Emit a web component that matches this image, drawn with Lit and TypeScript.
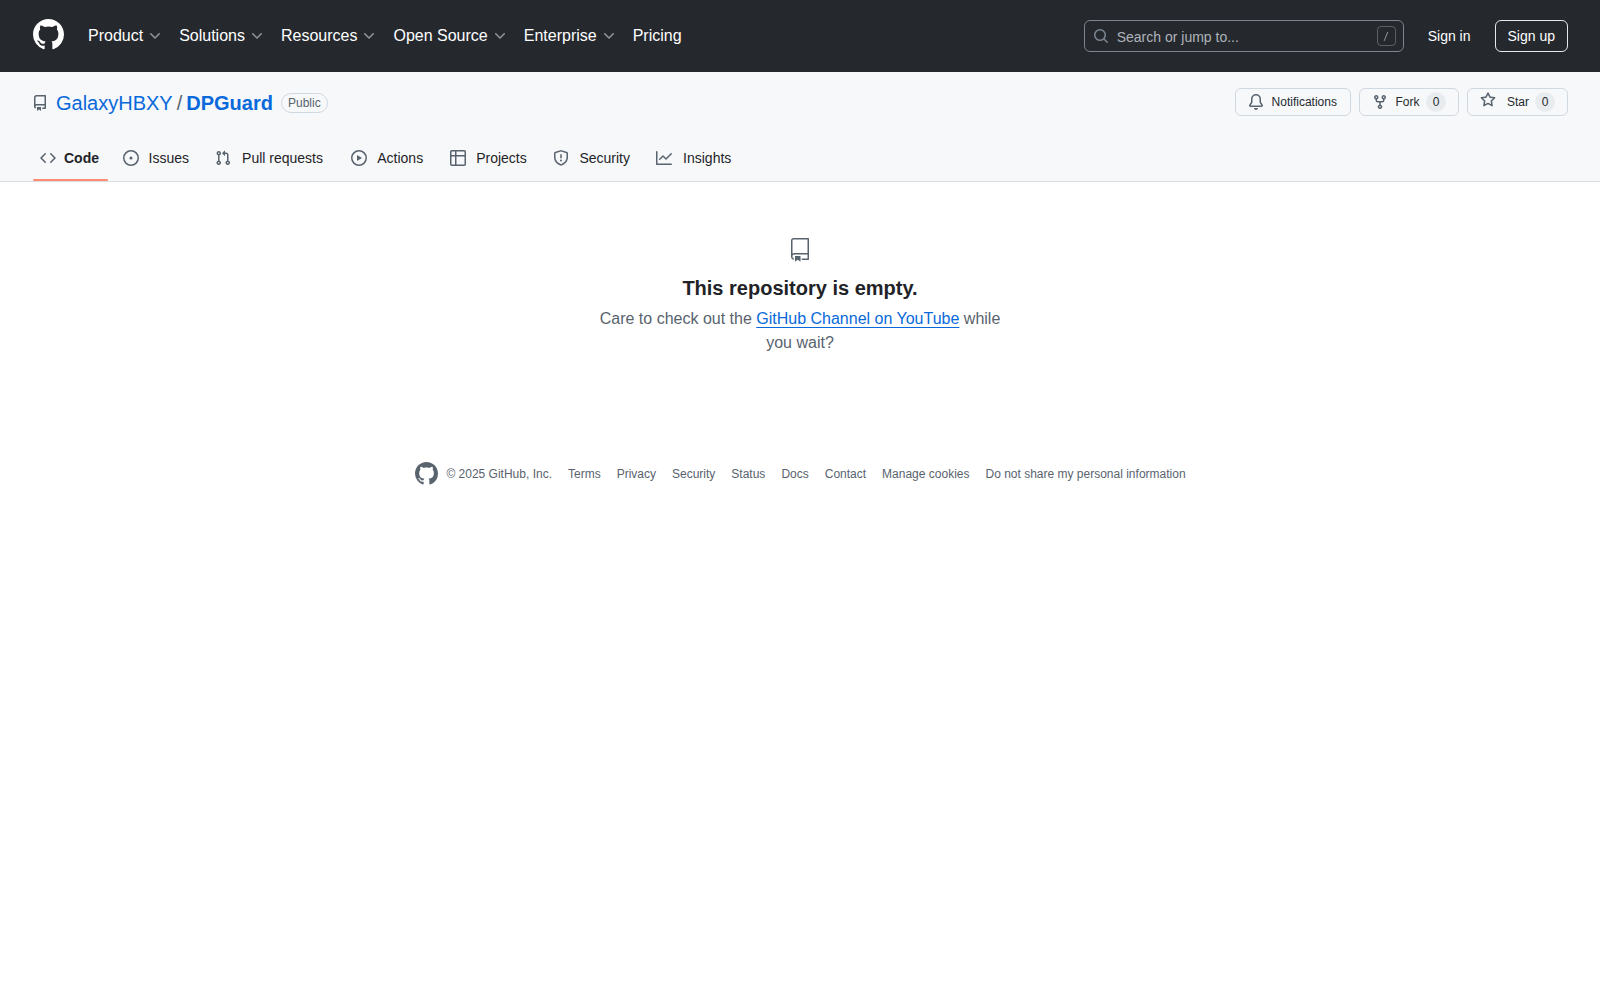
import { LitElement, html, css } from 'lit';
import { customElement } from 'lit/decorators.js';

const ICONS: Record<string, string> = {
  mark: 'M8 0c4.42 0 8 3.58 8 8a8.013 8.013 0 0 1-5.45 7.59c-.4.08-.55-.17-.55-.38 0-.27.01-1.13.01-2.2 0-.75-.25-1.23-.54-1.48 1.78-.2 3.65-.88 3.65-3.95 0-.88-.31-1.59-.82-2.15.08-.2.36-1.02-.08-2.12 0 0-.67-.22-2.2.82-.64-.18-1.32-.27-2-.27-.68 0-1.36.09-2 .27-1.53-1.03-2.2-.82-2.2-.82-.44 1.1-.16 1.92-.08 2.12-.51.56-.82 1.28-.82 2.15 0 3.06 1.86 3.75 3.64 3.95-.23.2-.44.55-.51 1.07-.46.21-1.61.55-2.33-.66-.15-.24-.6-.83-1.23-.82-.67.01-.27.38.01.53.34.19.73.9.82 1.13.16.45.68 1.31 2.69.94 0 .67.01 1.3.01 1.49 0 .21-.15.45-.55.38A7.995 7.995 0 0 1 0 8c0-4.42 3.58-8 8-8Z',
  repo: 'M2 2.5A2.5 2.5 0 0 1 4.5 0h8.75a.75.75 0 0 1 .75.75v12.5a.75.75 0 0 1-.75.75h-2.5a.75.75 0 0 1 0-1.5h1.75v-2h-8a1 1 0 0 0-.714 1.7.75.75 0 1 1-1.072 1.05A2.495 2.495 0 0 1 2 11.5Zm10.5-1h-8a1 1 0 0 0-1 1v6.708A2.486 2.486 0 0 1 4.5 9h8ZM5 12.25a.25.25 0 0 1 .25-.25h3.5a.25.25 0 0 1 .25.25v3.25a.25.25 0 0 1-.4.2l-1.45-1.087a.249.249 0 0 0-.3 0L5.4 15.7a.25.25 0 0 1-.4-.2Z',
  code: 'm11.28 3.22 4.25 4.25a.75.75 0 0 1 0 1.06l-4.25 4.25a.749.749 0 0 1-1.275-.326.749.749 0 0 1 .215-.734L13.94 8l-3.72-3.72a.749.749 0 0 1 .326-1.275.749.749 0 0 1 .734.215Zm-6.56 0a.751.751 0 0 1 1.042.018.751.751 0 0 1 .018 1.042L2.06 8l3.72 3.72a.749.749 0 0 1-.326 1.275.749.749 0 0 1-.734-.215L.47 8.53a.75.75 0 0 1 0-1.06Z',
  issue: 'M8 9.5a1.5 1.5 0 1 0 0-3 1.5 1.5 0 0 0 0 3ZM8 0a8 8 0 1 1 0 16A8 8 0 0 1 8 0ZM1.5 8a6.5 6.5 0 1 0 13 0 6.5 6.5 0 0 0-13 0Z',
  pull: 'M1.5 3.25a2.25 2.25 0 1 1 3 2.122v5.256a2.251 2.251 0 1 1-1.5 0V5.372A2.25 2.25 0 0 1 1.5 3.25Zm5.677-.177L9.573.677A.25.25 0 0 1 10 .854V2.5h1A2.5 2.5 0 0 1 13.5 5v5.628a2.251 2.251 0 1 1-1.5 0V5a1 1 0 0 0-1-1h-1v1.646a.25.25 0 0 1-.427.177L7.177 3.427a.25.25 0 0 1 0-.354ZM3.75 2.5a.75.75 0 1 0 0 1.5.75.75 0 0 0 0-1.5Zm0 9.5a.75.75 0 1 0 0 1.5.75.75 0 0 0 0-1.5Zm8.25.75a.75.75 0 1 0 1.5 0 .75.75 0 0 0-1.5 0Z',
  play: 'M8 0a8 8 0 1 1 0 16A8 8 0 0 1 8 0ZM1.5 8a6.5 6.5 0 1 0 13 0 6.5 6.5 0 0 0-13 0Zm4.879-2.773 4.264 2.559a.25.25 0 0 1 0 .428l-4.264 2.559A.25.25 0 0 1 6 10.559V5.442a.25.25 0 0 1 .379-.215Z',
  table: 'M0 1.75C0 .784.784 0 1.75 0h12.5C15.216 0 16 .784 16 1.75v12.5A1.75 1.75 0 0 1 14.25 16H1.75A1.75 1.75 0 0 1 0 14.25ZM6.5 6.5v8h7.75a.25.25 0 0 0 .25-.25V6.5Zm8-1.5V1.75a.25.25 0 0 0-.25-.25H6.5V5Zm-13 1.5v7.75c0 .138.112.25.25.25H5v-8ZM5 5V1.5H1.75a.25.25 0 0 0-.25.25V5Z',
  shield: 'M7.467.133a1.748 1.748 0 0 1 1.066 0l5.25 1.68A1.75 1.75 0 0 1 15 3.48V7c0 1.566-.32 3.182-1.303 4.682-.983 1.498-2.585 2.813-5.032 3.855a1.697 1.697 0 0 1-1.33 0c-2.447-1.042-4.049-2.357-5.032-3.855C1.32 10.182 1 8.566 1 7V3.48a1.75 1.75 0 0 1 1.217-1.667Zm.61 1.429a.25.25 0 0 0-.153 0l-5.25 1.68a.25.25 0 0 0-.174.238V7c0 1.358.275 2.666 1.057 3.86.784 1.194 2.121 2.34 4.366 3.297a.196.196 0 0 0 .154 0c2.245-.956 3.582-2.104 4.366-3.298C13.225 9.666 13.5 8.36 13.5 7V3.48a.251.251 0 0 0-.174-.237l-5.25-1.68ZM8.75 4.75v3a.75.75 0 0 1-1.5 0v-3a.75.75 0 0 1 1.5 0ZM9 10.5a1 1 0 1 1-2 0 1 1 0 0 1 2 0Z',
  graph: 'M1.5 1.75V13.5h13.75a.75.75 0 0 1 0 1.5H.75a.75.75 0 0 1-.75-.75V1.75a.75.75 0 0 1 1.5 0Zm14.28 2.53-5.25 5.25a.75.75 0 0 1-1.06 0L7 7.06 4.28 9.78a.751.751 0 0 1-1.042-.018.751.751 0 0 1-.018-1.042l3.25-3.25a.75.75 0 0 1 1.06 0L10 7.94l4.72-4.72a.751.751 0 0 1 1.042.018.751.751 0 0 1 .018 1.042Z',
  bell: 'M8 16a2 2 0 0 0 1.985-1.75c.017-.137-.097-.25-.235-.25h-3.5c-.138 0-.252.113-.235.25A2 2 0 0 0 8 16ZM3 5a5 5 0 0 1 10 0v2.947c0 .05.015.098.042.139l1.703 2.555A1.519 1.519 0 0 1 13.482 13H2.518a1.516 1.516 0 0 1-1.263-2.36l1.703-2.554A.255.255 0 0 0 3 7.947Zm5-3.5A3.5 3.5 0 0 0 4.5 5v2.947c0 .346-.102.683-.294.97l-1.703 2.556a.017.017 0 0 0-.003.01l.001.006c0 .002.002.004.004.006l.006.004.007.001h10.964l.007-.001.006-.004.004-.006.001-.007a.017.017 0 0 0-.003-.01l-1.703-2.554a1.745 1.745 0 0 1-.294-.97V5A3.5 3.5 0 0 0 8 1.5Z',
  fork: 'M5 5.372v.878c0 .414.336.75.75.75h4.5a.75.75 0 0 0 .75-.75v-.878a2.25 2.25 0 1 1 1.5 0v.878a2.25 2.25 0 0 1-2.25 2.25h-1.5v2.128a2.251 2.251 0 1 1-1.5 0V8.5h-1.5A2.25 2.25 0 0 1 3.5 6.25v-.878a2.25 2.25 0 1 1 1.5 0ZM5 3.25a.75.75 0 1 0-1.5 0 .75.75 0 0 0 1.5 0Zm6.75.75a.75.75 0 1 0 0-1.5.75.75 0 0 0 0 1.5Zm-3 8.75a.75.75 0 1 0-1.5 0 .75.75 0 0 0 1.5 0Z',
  star: 'M8 .25a.75.75 0 0 1 .673.418l1.882 3.815 4.21.612a.75.75 0 0 1 .416 1.279l-3.046 2.97.719 4.192a.751.751 0 0 1-1.088.791L8 12.347l-3.766 1.98a.75.75 0 0 1-1.088-.79l.72-4.194L.818 6.374a.75.75 0 0 1 .416-1.28l4.21-.611L7.327.668A.75.75 0 0 1 8 .25Zm0 2.445L6.615 5.5a.75.75 0 0 1-.564.41l-3.097.45 2.24 2.184a.75.75 0 0 1 .216.664l-.528 3.084 2.769-1.456a.75.75 0 0 1 .698 0l2.77 1.456-.53-3.084a.75.75 0 0 1 .216-.664l2.24-2.183-3.096-.45a.75.75 0 0 1-.564-.41L8 2.694Z',
  search: 'M10.68 11.74a6 6 0 0 1-7.922-8.982 6 6 0 0 1 8.982 7.922l3.04 3.04a.749.749 0 0 1-.326 1.275.749.749 0 0 1-.734-.215ZM11.5 7a4.499 4.499 0 1 0-8.997 0A4.499 4.499 0 0 0 11.5 7Z',
  chevron: 'M12.78 5.22a.749.749 0 0 1 0 1.06l-4.25 4.25a.749.749 0 0 1-1.06 0L3.22 6.28a.749.749 0 1 1 1.06-1.06L8 8.939l3.72-3.719a.749.749 0 0 1 1.06 0Z',
};

const REPO_24 = 'M3 2.75A2.75 2.75 0 0 1 5.75 0h14.5a.75.75 0 0 1 .75.75v20.5a.75.75 0 0 1-.75.75h-6a.75.75 0 0 1 0-1.5h5.25v-4H6A1.5 1.5 0 0 0 4.5 18v.75c0 .716.43 1.334 1.05 1.605a.75.75 0 0 1-.6 1.374A3.251 3.251 0 0 1 3 18.75ZM19.5 1.5H5.75c-.69 0-1.25.56-1.25 1.25v12.651A2.989 2.989 0 0 1 6 15h13.5ZM7 18.25a.25.25 0 0 1 .25-.25h5a.25.25 0 0 1 .25.25v5.01a.25.25 0 0 1-.397.201l-2.206-1.604a.25.25 0 0 0-.294 0L7.397 23.46a.25.25 0 0 1-.397-.2Z';

const icon = (name: string, size = 16, cls = '') => html`
  <svg class=${cls} viewBox="0 0 16 16" width=${size} height=${size} fill="currentColor" aria-hidden="true"><path d=${ICONS[name]}></path></svg>`;

const MENU = [
  { label: 'Product', chevron: true },
  { label: 'Solutions', chevron: true },
  { label: 'Resources', chevron: true },
  { label: 'Open Source', chevron: true },
  { label: 'Enterprise', chevron: true },
  { label: 'Pricing', chevron: false },
];

const TABS = [
  { label: 'Code', icon: 'code', active: true },
  { label: 'Issues', icon: 'issue' },
  { label: 'Pull requests', icon: 'pull' },
  { label: 'Actions', icon: 'play' },
  { label: 'Projects', icon: 'table' },
  { label: 'Security', icon: 'shield' },
  { label: 'Insights', icon: 'graph' },
];

const FOOTER = ['Terms', 'Privacy', 'Security', 'Status', 'Docs', 'Contact', 'Manage cookies', 'Do not share my personal information'];

@customElement('app-root')
export class AppRoot extends LitElement {
  static styles = css`
    :host {
      display: block;
      font-family: "Liberation Sans", Arial, sans-serif;
      font-size: 14px;
      color: #1f2328;
      background: #fff;
    }
    a {
      color: inherit;
      text-decoration: none;
    }
    svg {
      display: block;
      flex: none;
    }

    .top {
      display: flex;
      align-items: center;
      height: 72px;
      box-sizing: border-box;
      padding: 0 32px;
      background: #25292e;
      color: #fff;
    }
    .logo {
      margin: 0 16px 3px 1px;
    }
    .menu {
      display: flex;
      flex: 1;
      font-size: 16px;
    }
    .menu a {
      display: flex;
      align-items: center;
      padding: 0 8px;
    }
    .menu .chev {
      margin-left: 4px;
      opacity: 0.5;
    }
    .search {
      display: flex;
      align-items: center;
      width: 320px;
      height: 32px;
      box-sizing: border-box;
      padding: 0 7px 0 8px;
      border: 1px solid #7d8590;
      border-radius: 6px;
      color: #afb4ba;
    }
    .search .mag {
      color: #7d8590;
      margin-right: 8px;
    }
    .search span {
      flex: 1;
      padding-top: 2px;
    }
    .signin {
      margin: 0 24px;
    }
    .signup {
      display: flex;
      align-items: center;
      height: 32px;
      box-sizing: border-box;
      padding: 0 12px;
      border: 1px solid #e6e8ea;
      border-radius: 6px;
    }

    .repohead {
      background: #f6f8fa;
      border-bottom: 1px solid #d8dee4;
      padding: 16px 32px 0;
    }
    .title-row {
      display: flex;
      align-items: center;
      height: 28px;
      margin-bottom: 18px;
    }
    .title-row .repo-icon {
      color: #59636e;
      margin: 2px 8px 0 0;
    }
    .title {
      display: flex;
      align-items: center;
      font-size: 20px;
      flex: 1;
      padding-top: 2px;
    }
    .title a {
      color: #0969da;
    }
    .title b {
      font-weight: 700;
    }
    .slash {
      margin: 0 4px;
      color: #59636e;
    }
    .badge {
      margin-left: 8px;
      padding: 0 6px;
      border: 1px solid #d1d9e0;
      border-radius: 999px;
      font-size: 12px;
      line-height: 18px;
      color: #59636e;
    }
    .actions {
      display: flex;
      gap: 8px;
    }
    .btn {
      display: flex;
      align-items: center;
      height: 28px;
      box-sizing: border-box;
      padding: 0 12px;
      border: 1px solid #d1d9e0;
      border-radius: 6px;
      font-size: 12px;
      color: #25292e;
      background: #f6f8fa;
    }
    .btn.wide {
      padding-right: 13px;
    }
    .btn svg {
      color: #59636e;
      margin-right: 8px;
    }
    .btn .fork {
      margin-right: 7.5px;
    }
    .btn .fork ~ .counter {
      margin-left: 6.5px;
    }
    .btn .star {
      margin: 0 11px 4px 0;
    }
    .counter {
      display: block;
      min-width: 20px;
      margin-left: 6px;
      border-radius: 10px;
      background: #e9ecef;
      line-height: 20px;
      text-align: center;
    }

    .tabs {
      display: flex;
      gap: 8px;
      height: 47px;
    }
    .tab {
      position: relative;
      display: flex;
      align-items: center;
      gap: 8px;
      padding: 1px 8px 0;
    }
    .tab svg {
      color: #59636e;
    }
    /* bold copy keeps the label as wide as when it is selected */
    .label {
      display: inline-flex;
      flex-direction: column;
      align-items: center;
    }
    .label::before {
      content: attr(data-content);
      height: 0;
      overflow: hidden;
      visibility: hidden;
      font-weight: 700;
    }
    .tab.active {
      font-weight: 700;
    }
    .tab.active::after {
      content: "";
      position: absolute;
      left: 1px;
      right: -1px;
      bottom: 0;
      height: 2px;
      border-radius: 6px;
      background: #fd8c73;
    }

    .blank {
      width: 485px;
      box-sizing: border-box;
      margin: 24px auto 0;
      padding: 32px;
      text-align: center;
      color: #59636e;
    }
    .blank svg {
      margin: 0 auto 12px;
    }
    .blank h2 {
      margin: 0 0 5px;
      font-size: 20px;
      line-height: 28px;
      font-weight: 700;
      color: #1f2328;
    }
    .blank p {
      margin: 0;
      font-size: 16px;
      line-height: 24px;
    }
    .blank a {
      color: #0969da;
      text-decoration: underline;
      text-underline-offset: 3px;
    }

    .footer {
      display: flex;
      justify-content: center;
      align-items: center;
      gap: 16px;
      margin-top: 75px;
      font-size: 12px;
      color: #59636e;
    }
    .copy {
      display: flex;
      align-items: center;
      gap: 8px;
    }
    .copy svg {
      margin-left: 1px;
    }
  `;

  render() {
    return html`
      <header class="top">
        <a class="logo" href="#">${icon('mark', 31)}</a>
        <nav class="menu">
          ${MENU.map(m => html`<a href="#">${m.label}${m.chevron ? icon('chevron', 16, 'chev') : ''}</a>`)}
        </nav>
        <div class="search">
          ${icon('search', 16, 'mag')}
          <span>Search or jump to...</span>
          <svg viewBox="0 0 19 20" width="19" height="20" fill="none" aria-hidden="true">
            <rect x="0.5" y="0.5" width="18" height="19" rx="3.5" stroke="#7d8590" stroke-opacity="0.6"></rect>
            <path d="M11.3 6 7.5 15.1h-.9L10.3 6h1Z" fill="#979a9c"></path>
          </svg>
        </div>
        <a class="signin" href="#">Sign in</a>
        <a class="signup" href="#">Sign up</a>
      </header>

      <div class="repohead">
        <div class="title-row">
          ${icon('repo', 16, 'repo-icon')}
          <div class="title">
            <a href="#">GalaxyHBXY</a>
            <span class="slash">/</span>
            <a href="#"><b>DPGuard</b></a>
            <span class="badge">Public</span>
          </div>
          <div class="actions">
            <a class="btn wide" href="#">${icon('bell')}Notifications</a>
            <a class="btn" href="#">${icon('fork', 16, 'fork')}Fork<span class="counter">0</span></a>
            <a class="btn" href="#">${icon('star', 16, 'star')}Star<span class="counter">0</span></a>
          </div>
        </div>
        <nav class="tabs">
          ${TABS.map(t => html`<a class="tab ${t.active ? 'active' : ''}" href="#">${icon(t.icon)}<span class="label" data-content=${t.label}>${t.label}</span></a>`)}
        </nav>
      </div>

      <main class="blank">
        <svg viewBox="0 0 24 24" width="24" height="24" fill="currentColor" aria-hidden="true"><path d=${REPO_24}></path></svg>
        <h2>This repository is empty.</h2>
        <p>Care to check out the <a href="#">GitHub Channel on YouTube</a> while you wait?</p>
      </main>

      <footer class="footer">
        <span class="copy">${icon('mark', 23)}© 2025 GitHub, Inc.</span>
        ${FOOTER.map(f => html`<a href="#">${f}</a>`)}
      </footer>
    `;
  }
}
